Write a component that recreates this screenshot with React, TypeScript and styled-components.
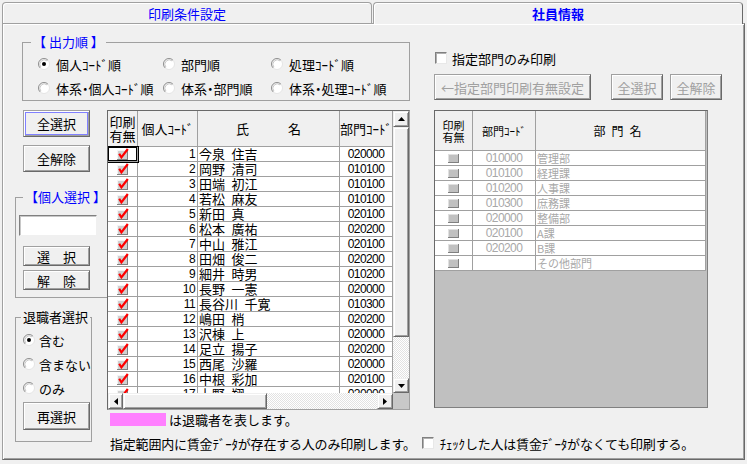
import React from "react";
import styled, { createGlobalStyle, css } from "styled-components";

const UI = `"Noto Sans CJK JP", "Noto Sans", sans-serif`;
const NUM = `"Liberation Sans", "Arimo", sans-serif`;

const GlobalStyle = createGlobalStyle`
  html, body { margin: 0; padding: 0; background: #f0f0f0; }
  *, *::before, *::after { box-sizing: border-box; }
`;

const Window = styled.div`
  width: 747px;
  height: 464px;
  padding: 0 2px;
  background: #f0f0f0;
  font-family: ${UI};
  font-size: 13px;
  line-height: 15px;
  color: #000;
  overflow: hidden;
`;

const TabBar = styled.div`
  display: flex;
  align-items: flex-start;
  height: 23px;
  padding-top: 2px;
  position: relative;
  z-index: 1;
`;

const Tab = styled.div<{ $active?: boolean }>`
  width: 370px;
  height: ${(p) => (p.$active ? 22 : 21)}px;
  margin-left: ${(p) => (p.$active ? 1 : 0)}px;
  display: flex;
  align-items: center;
  justify-content: center;
  color: #0000ff;
  font-weight: ${(p) => (p.$active ? 700 : 400)};
  background: #f0f0f0;
  border: 1px solid #a0a0a0;
  border-bottom: none;
  border-right-color: ${(p) => (p.$active ? "#696969" : "#a0a0a0")};
  border-radius: 4px 4px 0 0;
  box-shadow: inset 1px 1px #fff;
`;

const Panel = styled.div`
  height: 437px;
  border: 1px solid #a0a0a0;
  border-right-color: #696969;
  border-bottom-color: #696969;
  box-shadow: inset 1px 1px #fff, inset -1px -1px #a0a0a0;
  padding: 11px 0 0 12px;
`;

const Content = styled.div`
  display: grid;
  grid-template-columns: 86px 303px 292px;
  grid-template-rows: 75px 300px auto auto;
  column-gap: 6px;
`;

const Group = styled.fieldset<{ $area?: string; $ml?: number; $mt?: number; $pb?: number }>`
  margin: ${(p) => p.$mt ?? 0}px 0 0 ${(p) => p.$ml ?? 0}px;
  padding: 0 0 ${(p) => p.$pb ?? 0}px 0;
  border: 1px solid #a0a0a0;
  min-width: 0;
  ${(p) => p.$area && css`grid-column: ${p.$area};`}
  align-self: start;
`;

const Legend = styled.legend<{ $blue?: boolean; $offset: number }>`
  padding: 0 2px;
  margin-left: ${(p) => p.$offset}px;
  line-height: 14px;
  white-space: nowrap;
  color: ${(p) => (p.$blue ? "#0000ff" : "#000")};
`;

const RadioGrid = styled.div`
  display: grid;
  grid-template-columns: 125px 108px 1fr;
  grid-auto-rows: 24px;
  padding: 3px 0 0 15px;
  font-feature-settings: "palt";
`;

const RadioStack = styled.div`
  display: grid;
  grid-auto-rows: 24px;
  padding: 4px 0 0 7px;
`;

const RadioItem = styled.label<{ $gap: number }>`
  display: flex;
  align-items: center;
  gap: ${(p) => p.$gap}px;
  white-space: nowrap;
`;

const RightTop = styled.div`
  grid-column: 3;
  margin-left: 18px;
  padding-top: 17px;
`;

const CheckRow = styled.label`
  display: flex;
  align-items: center;
  gap: 5px;
  height: 12px;
  margin-left: 1px;
  white-space: nowrap;
`;

const CheckBox = styled.span`
  display: inline-block;
  flex: none;
  width: 12px;
  height: 12px;
  background: #fff;
  border: 1px solid;
  border-color: #808080 #e8e8e8 #e8e8e8 #808080;
  box-shadow: inset 1px 1px #b0b0b0;
`;

const ButtonRow = styled.div`
  display: flex;
  margin-top: 10px;
`;

const Button = styled.button<{
  $w: number;
  $h: number;
  $ml?: number;
  $mt?: number;
  $focus?: boolean;
  $disabled?: boolean;
}>`
  flex: none;
  width: ${(p) => p.$w}px;
  height: ${(p) => p.$h}px;
  margin: ${(p) => p.$mt ?? 0}px 0 0 ${(p) => p.$ml ?? 0}px;
  padding: 0;
  font-family: ${UI};
  font-size: 13px;
  line-height: 15px;
  white-space: nowrap;
  color: ${(p) => (p.$disabled ? "#a0a0a0" : "#000")};
  background: #f0f0f0;
  border: 1px solid;
  border-color: #a0a0a0 #696969 #696969 #a0a0a0;
  box-shadow: inset 1px 1px #fff, inset -1px -1px #a0a0a0;
  ${(p) =>
    p.$focus &&
    css`
      outline: 1px solid #8080ff;
      outline-offset: -3px;
    `}
`;

const LeftCol = styled.div`
  grid-column: 1;
  grid-row: 2 / 5;
  display: flex;
  flex-direction: column;
`;

const TextInput = styled.div`
  width: 78px;
  height: 21px;
  margin: 11px 0 0 3px;
  background: #fff;
  border: 1px solid;
  border-color: #808080 #f0f0f0 #f0f0f0 #808080;
  box-shadow: inset 1px 1px #c8c8c8;
`;

/* ---------- employee grid ---------- */

const GridFrame = styled.div`
  grid-column: 2;
  grid-row: 2;
  height: 300px;
  border: 1px solid;
  border-color: #696969 #a0a0a0 #a0a0a0 #696969;
  display: grid;
  grid-template-columns: 285px 16px;
  grid-template-rows: 282px 16px;
  background: #fff;
  overflow: hidden;
`;

const Table = styled.div<{ $cols: string; $head: number }>`
  display: grid;
  grid-template-columns: ${(p) => p.$cols};
  grid-template-rows: ${(p) => p.$head}px;
  grid-auto-rows: 15px;
  align-content: start;
  overflow: hidden;
`;

const HeadCell = styled.div<{ $size?: number; $spacing?: number }>`
  background: #f0f0f0;
  border-right: 1px solid #a0a0a0;
  border-bottom: 1px solid #a0a0a0;
  display: flex;
  align-items: center;
  justify-content: center;
  text-align: center;
  white-space: pre;
  font-size: ${(p) => p.$size ?? 13}px;
  line-height: ${(p) => (p.$size ? p.$size + 1 : 14)}px;
  letter-spacing: ${(p) => p.$spacing ?? 0}px;
`;

const Cell = styled.div<{
  $align?: "left" | "right" | "center";
  $num?: boolean;
  $focus?: boolean;
  $dim?: boolean;
  $size?: number;
}>`
  background: #fff;
  border-right: 1px solid #a0a0a0;
  border-bottom: 1px solid #a0a0a0;
  display: flex;
  align-items: center;
  justify-content: ${(p) =>
    p.$align === "right" ? "flex-end" : p.$align === "left" ? "flex-start" : "center"};
  padding: 0 ${(p) => (p.$align === "right" ? 2 : 1)}px 0 1px;
  white-space: nowrap;
  font-family: ${(p) => (p.$num ? NUM : UI)};
  font-size: ${(p) => p.$size ?? (p.$num ? 12 : 13)}px;
  letter-spacing: ${(p) => (p.$num ? -0.6 : 0)}px;
  line-height: 14px;
  color: ${(p) => (p.$dim ? "#a8a8a8" : "#000")};
  ${(p) =>
    p.$focus &&
    css`
      box-shadow: 0 0 0 1px #000, inset 0 0 0 1px #000;
      position: relative;
    `}
`;

const VScroll = styled.div`
  display: flex;
  flex-direction: column;
`;

const HScroll = styled.div`
  display: flex;
`;

const ScrollBtn = styled.div<{ $w: number; $h: number }>`
  flex: none;
  width: ${(p) => p.$w}px;
  height: ${(p) => p.$h}px;
  display: flex;
  align-items: center;
  justify-content: center;
  background: #f0f0f0;
  border: 1px solid;
  border-color: #f0f0f0 #696969 #696969 #f0f0f0;
  box-shadow: inset 1px 1px #fff, inset -1px -1px #a0a0a0;
`;

const Track = styled.div`
  flex: 1;
  background: repeating-conic-gradient(#ffffff 0 25%, #e2e2e2 0 50%) 0 0 / 2px 2px;
`;

const Corner = styled.div`
  background: #c8c8c8;
`;

/* ---------- department grid ---------- */

const DeptFrame = styled.div`
  grid-column: 3;
  grid-row: 2;
  height: 298px;
  margin-left: 18px;
  border: 1px solid;
  border-color: #696969 #808080 #808080 #696969;
  background: #c0c0c0;
  overflow: hidden;
`;

const DeptTable = styled(Table)`
  width: 271px;
`;

/* ---------- bottom ---------- */

const LegendRow = styled.div`
  grid-column: 2 / 4;
  grid-row: 3;
  display: flex;
  align-items: center;
  height: 13px;
  margin-top: 3px;
  white-space: nowrap;
`;

const PinkSwatch = styled.span`
  width: 56px;
  height: 13px;
  margin: 0 3px 0 3px;
  background: #ff80ff;
`;

const NoteRow = styled.div`
  grid-column: 2 / 4;
  grid-row: 4;
  display: flex;
  align-items: center;
  height: 20px;
  margin-top: 7px;
  padding-left: 3px;
  gap: 6px;
  white-space: nowrap;
  letter-spacing: -0.2px;
`;

/* ---------- drawings ---------- */

const Radio = ({ checked }: { checked?: boolean }) => (
  <svg width="12" height="12" viewBox="0 0 12 12" style={{ flex: "none" }}>
    <circle cx="6" cy="6" r="5.5" fill="#fff" stroke="#e4e4e4" />
    <path d="M2.1 9.9A5.5 5.5 0 0 1 9.9 2.1" fill="none" stroke="#909090" />
    <path d="M2.9 9.1A4.4 4.4 0 0 1 9.1 2.9" fill="none" stroke="#c8c8c8" />
    {checked && <circle cx="6" cy="6" r="2" fill="#000" />}
  </svg>
);

const RedCheck = () => (
  <svg width="13" height="12" viewBox="0 0 13 12">
    <rect x="1" y="2" width="11" height="10" fill="#d0d0d0" />
    <path d="M1 2.5H12M1.5 2V12" stroke="#f4f4f4" />
    <path d="M1 11.5H12M11.5 2V12" stroke="#808080" />
    <path d="M3.2 5.8L5.4 9.4L11.8 1" stroke="#ff0000" strokeWidth="2.2" fill="none" />
  </svg>
);

const GrayBox = () => (
  <svg width="11" height="9" viewBox="0 0 11 9">
    <rect x="0" y="0" width="11" height="9" fill="#c0c0c0" />
    <path d="M0 0.5H11M0.5 0V9" stroke="#e0e0e0" />
    <path d="M0 8.5H11M10.5 0V9" stroke="#808080" />
  </svg>
);

const Arrow = ({ dir }: { dir: "up" | "down" | "left" | "right" }) => {
  const pts = {
    up: "0,4 7,4 3.5,0",
    down: "0,0 7,0 3.5,4",
    left: "4,0 4,7 0,3.5",
    right: "0,0 0,7 4,3.5",
  }[dir];
  const v = dir === "up" || dir === "down";
  return (
    <svg width={v ? 7 : 4} height={v ? 4 : 7} viewBox={v ? "0 0 7 4" : "0 0 4 7"}>
      <polygon points={pts} fill="#000" />
    </svg>
  );
};

/* ---------- data ---------- */

const people: [number, string, string, string][] = [
  [1, "今泉", "住吉", "020000"],
  [2, "岡野", "清司", "010100"],
  [3, "田端", "初江", "010100"],
  [4, "若松", "麻友", "010100"],
  [5, "新田", "真", "020100"],
  [6, "松本", "廣祐", "020200"],
  [7, "中山", "雅江", "020100"],
  [8, "田畑", "俊二", "020200"],
  [9, "細井", "時男", "010200"],
  [10, "長野", "一憲", "020000"],
  [11, "長谷川", "千寛", "010300"],
  [12, "嶋田", "梢", "020200"],
  [13, "沢棟", "上", "020000"],
  [14, "足立", "揚子", "020200"],
  [15, "西尾", "沙羅", "020000"],
  [16, "中根", "彩加", "020100"],
  [17, "上野", "翔", "020000"],
];

const depts: [string, string][] = [
  ["010000", "管理部"],
  ["010100", "経理課"],
  ["010200", "人事課"],
  ["010300", "庶務課"],
  ["020000", "整備部"],
  ["020100", "A課"],
  ["020200", "B課"],
  ["", "その他部門"],
];

const orderOptions = [
  "個人ｺｰﾄﾞ順",
  "部門順",
  "処理ｺｰﾄﾞ順",
  "体系・個人ｺｰﾄﾞ順",
  "体系・部門順",
  "体系・処理ｺｰﾄﾞ順",
];

export default function App() {
  return (
    <>
      <GlobalStyle />
      <Window>
        <TabBar>
          <Tab>印刷条件設定</Tab>
          <Tab $active>社員情報</Tab>
        </TabBar>
        <Panel>
          <Content>
            <Group $area="1 / 3" $ml={7}>
              <Legend $blue $offset={8}>【 出力順 】</Legend>
              <RadioGrid>
                {orderOptions.map((o, i) => (
                  <RadioItem key={o} $gap={6}>
                    <Radio checked={i === 0} />
                    {o}
                  </RadioItem>
                ))}
              </RadioGrid>
            </Group>

            <RightTop>
              <CheckRow>
                <CheckBox />
                指定部門のみ印刷
              </CheckRow>
              <ButtonRow>
                <Button $w={157} $h={26} $disabled>
                  ←指定部門印刷有無設定
                </Button>
                <Button $w={52} $h={26} $ml={20} $disabled>
                  全選択
                </Button>
                <Button $w={52} $h={26} $ml={7} $disabled>
                  全解除
                </Button>
              </ButtonRow>
            </RightTop>

            <LeftCol>
              <Button $w={67} $h={27} $ml={8} $focus>
                全選択
              </Button>
              <Button $w={67} $h={27} $ml={8} $mt={8}>
                全解除
              </Button>
              <Group $mt={18} $pb={7}>
                <Legend $blue $offset={7}>【個人選択 】</Legend>
                <TextInput />
                <Button $w={67} $h={20} $ml={7} $mt={10}>
                  選　択
                </Button>
                <Button $w={67} $h={20} $ml={7} $mt={4}>
                  解　除
                </Button>
              </Group>
              <Group $mt={12} $pb={11}>
                <Legend $offset={5}>退職者選択</Legend>
                <RadioStack>
                  {["含む", "含まない", "のみ"].map((o, i) => (
                    <RadioItem key={o} $gap={4}>
                      <Radio checked={i === 0} />
                      {o}
                    </RadioItem>
                  ))}
                </RadioStack>
                <Button $w={67} $h={28} $ml={7} $mt={2}>
                  再選択
                </Button>
              </Group>
            </LeftCol>

            <GridFrame>
              <Table $cols="30px 60px 142px 53px" $head={36}>
                <HeadCell>{"印刷\n有無"}</HeadCell>
                <HeadCell>個人ｺｰﾄﾞ</HeadCell>
                <HeadCell>氏　　　名</HeadCell>
                <HeadCell>部門ｺｰﾄﾞ</HeadCell>
                {people.map(([no, last, first, code]) => (
                  <React.Fragment key={no}>
                    <Cell $focus={no === 1}>
                      <RedCheck />
                    </Cell>
                    <Cell $align="right" $num>
                      {no}
                    </Cell>
                    <Cell $align="left">{`${last}\u2002${first}`}</Cell>
                    <Cell $num>{code}</Cell>
                  </React.Fragment>
                ))}
              </Table>
              <VScroll>
                <ScrollBtn $w={16} $h={16}>
                  <Arrow dir="up" />
                </ScrollBtn>
                <ScrollBtn $w={16} $h={210} />
                <Track />
                <ScrollBtn $w={16} $h={15}>
                  <Arrow dir="down" />
                </ScrollBtn>
              </VScroll>
              <HScroll>
                <ScrollBtn $w={15} $h={16}>
                  <Arrow dir="left" />
                </ScrollBtn>
                <ScrollBtn $w={144} $h={16} />
                <Track />
                <ScrollBtn $w={16} $h={16}>
                  <Arrow dir="right" />
                </ScrollBtn>
              </HScroll>
              <Corner />
            </GridFrame>

            <DeptFrame>
              <DeptTable $cols="38px 63px 170px" $head={40}>
                <HeadCell $size={11}>{"印刷\n有無"}</HeadCell>
                <HeadCell $size={11}>部門ｺｰﾄﾞ</HeadCell>
                <HeadCell $size={12} $spacing={6}>部門名</HeadCell>
                {depts.map(([code, name]) => (
                  <React.Fragment key={name}>
                    <Cell>
                      <GrayBox />
                    </Cell>
                    <Cell $num $dim>
                      {code}
                    </Cell>
                    <Cell $align="left" $dim $size={11}>
                      {name}
                    </Cell>
                  </React.Fragment>
                ))}
              </DeptTable>
            </DeptFrame>

            <LegendRow>
              <PinkSwatch />
              は退職者を表します。
            </LegendRow>

            <NoteRow>
              指定範囲内に賃金ﾃﾞｰﾀが存在する人のみ印刷します。
              <CheckBox />
              ﾁｪｯｸした人は賃金ﾃﾞｰﾀがなくても印刷する。
            </NoteRow>
          </Content>
        </Panel>
      </Window>
    </>
  );
}
